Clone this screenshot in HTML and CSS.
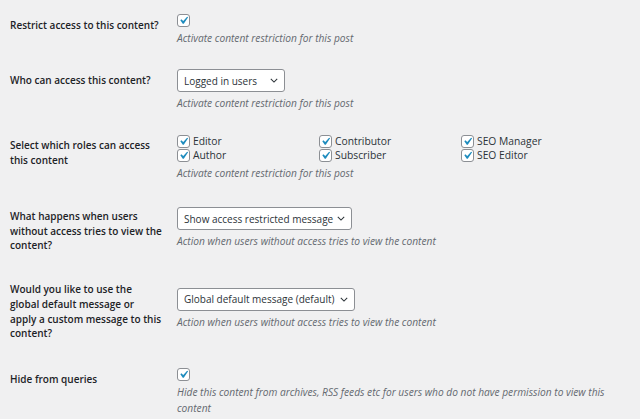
FILE: index.html
```html
<!DOCTYPE html>
<html lang="en">
<head>
    <meta charset="UTF-8">
    <meta name="viewport" content="width=device-width, initial-scale=1.0">
    <title>Content Restriction</title>
    <link rel="stylesheet" href="styles.css">
</head>
<body>
    <div class="form-table">
        <!-- Restrict toggle -->
        <div class="row">
            <div class="row-label">Restrict access to this content?</div>
            <div class="row-field">
                <span class="check-line">
                    <span class="checkbox"><svg viewBox="0 0 20 20"><path d="M14.83 4.89l1.34.94-5.81 8.38H9.02L5.78 9.67l1.34-1.25 2.57 2.4z"/></svg></span>
                </span>
                <p class="description">Activate content restriction for this post</p>
            </div>
        </div>

        <!-- Who can access -->
        <div class="row">
            <div class="row-label">Who can access this content?</div>
            <div class="row-field">
                <div class="select select-who">
                    <span>Logged in users</span>
                    <svg class="chevron" viewBox="0 0 10 6"><path d="M1 1l4 4 4-4"/></svg>
                </div>
                <p class="description">Activate content restriction for this post</p>
            </div>
        </div>

        <!-- Roles -->
        <div class="row">
            <div class="row-label">Select which roles can access this content</div>
            <div class="row-field">
                <div class="roles">
                    <label class="role"><span class="checkbox"><svg viewBox="0 0 20 20"><path d="M14.83 4.89l1.34.94-5.81 8.38H9.02L5.78 9.67l1.34-1.25 2.57 2.4z"/></svg></span>Editor</label>
                    <label class="role"><span class="checkbox"><svg viewBox="0 0 20 20"><path d="M14.83 4.89l1.34.94-5.81 8.38H9.02L5.78 9.67l1.34-1.25 2.57 2.4z"/></svg></span>Contributor</label>
                    <label class="role"><span class="checkbox"><svg viewBox="0 0 20 20"><path d="M14.83 4.89l1.34.94-5.81 8.38H9.02L5.78 9.67l1.34-1.25 2.57 2.4z"/></svg></span>SEO Manager</label>
                    <label class="role"><span class="checkbox"><svg viewBox="0 0 20 20"><path d="M14.83 4.89l1.34.94-5.81 8.38H9.02L5.78 9.67l1.34-1.25 2.57 2.4z"/></svg></span>Author</label>
                    <label class="role"><span class="checkbox"><svg viewBox="0 0 20 20"><path d="M14.83 4.89l1.34.94-5.81 8.38H9.02L5.78 9.67l1.34-1.25 2.57 2.4z"/></svg></span>Subscriber</label>
                    <label class="role"><span class="checkbox"><svg viewBox="0 0 20 20"><path d="M14.83 4.89l1.34.94-5.81 8.38H9.02L5.78 9.67l1.34-1.25 2.57 2.4z"/></svg></span>SEO Editor</label>
                </div>
                <p class="description">Activate content restriction for this post</p>
            </div>
        </div>

        <!-- Restricted behaviour -->
        <div class="row centered">
            <div class="row-label">What happens when users without access tries to view the content?</div>
            <div class="row-field">
                <div class="select select-action">
                    <span>Show access restricted message</span>
                    <svg class="chevron" viewBox="0 0 10 6"><path d="M1 1l4 4 4-4"/></svg>
                </div>
                <p class="description">Action when users without access tries to view the content</p>
            </div>
        </div>

        <!-- Message source -->
        <div class="row centered tall">
            <div class="row-label">Would you like to use the global default message or apply a custom message to this content?</div>
            <div class="row-field">
                <div class="select select-message">
                    <span>Global default message (default)</span>
                    <svg class="chevron" viewBox="0 0 10 6"><path d="M1 1l4 4 4-4"/></svg>
                </div>
                <p class="description">Action when users without access tries to view the content</p>
            </div>
        </div>

        <!-- Queries -->
        <div class="row">
            <div class="row-label">Hide from queries</div>
            <div class="row-field">
                <span class="check-line">
                    <span class="checkbox"><svg viewBox="0 0 20 20"><path d="M14.83 4.89l1.34.94-5.81 8.38H9.02L5.78 9.67l1.34-1.25 2.57 2.4z"/></svg></span>
                </span>
                <p class="description">Hide this content from archives, RSS feeds etc for users who do not have permission to view this content</p>
            </div>
        </div>
    </div>
</body>
</html>
```

FILE: styles.css
```css
body {
    margin: 0;
    background-color: #f0f0f1;
    color: #1d2327;
    font-family: "Open Sans", "Noto Sans", sans-serif;
    font-size: 10px;
}
.form-table {
    padding-top: 2.5px;
}
.row {
    display: flex;
    align-items: flex-start;
    padding: 11.5px 0;
}
.row.centered {
    align-items: center;
    padding: 13.5px 0 14.5px;
}
.row.tall {
    padding: 14.5px 0 18.5px;
}
.row-label {
    width: 152px;
    flex-shrink: 0;
    padding: 0 15px 0 10px;
    font-weight: 600;
    line-height: 14.7px;
}
.row:not(.centered) .row-label {
    padding-top: 4px;
}
/* long labels sit a little below the middle of the field */
.row.centered .row-label {
    margin: 3px 0 -3px;
}
.row-field {
    flex: 1;
    padding-right: 20px;
}
.check-line {
    display: flex;
    height: 13px;
}
.checkbox {
    width: 11px;
    height: 11px;
    border: 1px solid #8c8f94;
    border-radius: 3px;
    background-color: white;
    display: inline-flex;
    flex-shrink: 0;
}
.checkbox svg {
    width: 15px;
    height: 15px;
    margin: -2px;
    fill: #1e8cbe;
}
.description {
    margin: 3px 0 0;
    color: #646970;
    font-style: italic;
    font-size: 10.2px;
    line-height: 16px;
}
.select {
    display: inline-flex;
    align-items: center;
    justify-content: space-between;
    box-sizing: border-box;
    height: 23px;
    padding: 0 6px;
    border: 1px solid #8c8f94;
    border-radius: 3px;
    background-color: white;
    color: #2c3338;
    font-size: 10px;
}
.select-who {
    width: 108px;
}
.select-action {
    width: 175px;
}
.select-message {
    width: 178px;
}
.select .chevron {
    width: 8px;
    height: 5px;
    fill: none;
    stroke: #2c3338;
    stroke-width: 1.3;
}
.roles {
    display: grid;
    grid-template-columns: repeat(3, 142px);
}
.role {
    display: flex;
    align-items: center;
    gap: 3px;
    height: 14px;
    color: #2c3338;
    font-size: 10.3px;
}
```
